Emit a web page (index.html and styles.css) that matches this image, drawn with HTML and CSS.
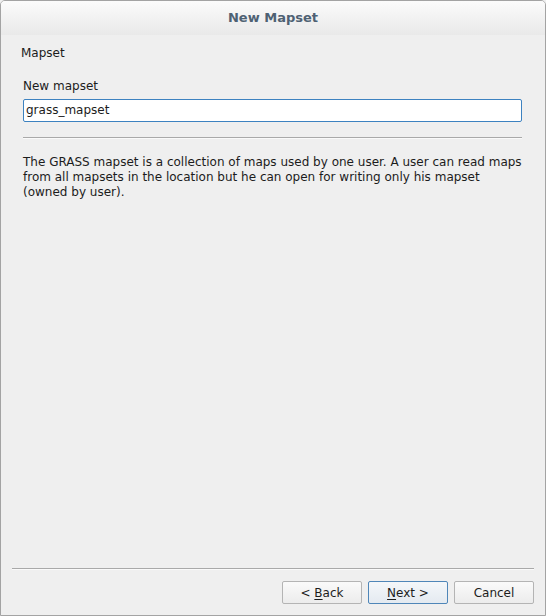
FILE: index.html
```html
<!DOCTYPE html>
<html>
<head>
<meta charset="utf-8">
<link rel="stylesheet" href="styles.css">
</head>
<body>
<div class="window">
  <div class="titlebar">New Mapset</div>
  <div class="content">
    <div class="page-title">Mapset</div>
    <div class="page">
      <div class="label">New mapset</div>
      <div class="input">grass_mapset</div>
      <div class="hsep"></div>
      <p class="desc">The GRASS mapset is a collection of maps used by one user. A user can read maps from all mapsets in the location but he can open for writing only his mapset (owned by user).</p>
    </div>
  </div>
  <div class="footer">
    <div class="fsep"></div>
    <div class="buttons">
      <button class="btn">&lt; <u>B</u>ack</button>
      <button class="btn default"><u>N</u>ext &gt;</button>
      <button class="btn">Cancel</button>
    </div>
  </div>
</div>
</body>
</html>
```
FILE: styles.css
```css
html, body {
  margin: 0;
  padding: 0;
  background: #efefef;
}
body {
  font-family: "DejaVu Sans", sans-serif;
  font-size: 12px;
  color: #1c1c1c;
}
.window {
  box-sizing: border-box;
  width: 546px;
  height: 616px;
  border: 1px solid #a3a3a3;
  border-radius: 5px 5px 0 0;
  background: #efefef;
  display: flex;
  flex-direction: column;
  overflow: hidden;
}
.titlebar {
  height: 34px;
  flex: none;
  background: linear-gradient(#fbfbfb, #e9e9e9);
  text-align: center;
  font-weight: bold;
  font-size: 13px;
  line-height: 33px;
  color: #4e6173;
}
.content {
  flex: 1;
  padding: 11px 11px 0 20px;
}
.page-title {
  line-height: 15px;
}
.page {
  padding: 18px 12px 0 2px;
}
.label {
  line-height: 15px;
}
.input {
  margin-top: 5px;
  box-sizing: border-box;
  height: 23px;
  background: #fff;
  border: 1px solid #3d82c0;
  border-radius: 2px;
  padding: 0 2px;
  line-height: 21px;
}
.hsep {
  margin-top: 15px;
  height: 1px;
  background: #a9a9a9;
  border-bottom: 1px solid #fafafa;
}
.desc {
  margin: 16px 0 0;
  line-height: 15px;
}
.footer {
  flex: none;
  padding: 0 11px 11px 11px;
}
.fsep {
  height: 1px;
  background: #a9a9a9;
  border-bottom: 1px solid #fafafa;
}
.buttons {
  margin-top: 11px;
  display: flex;
  justify-content: flex-end;
  gap: 6px;
}
.btn {
  box-sizing: border-box;
  width: 80px;
  height: 23px;
  padding: 0;
  font-family: "DejaVu Sans", sans-serif;
  font-size: 12px;
  color: #1c1c1c;
  background: linear-gradient(#fafafa, #ececec);
  border: 1px solid #b4b4b4;
  border-radius: 2px;
}
.btn u {
  text-decoration-thickness: 1px;
  text-underline-offset: 2px;
}
.btn.default {
  border-color: #4f86b8;
  background: linear-gradient(#f4f7fa, #e4eaf0);
}
```
